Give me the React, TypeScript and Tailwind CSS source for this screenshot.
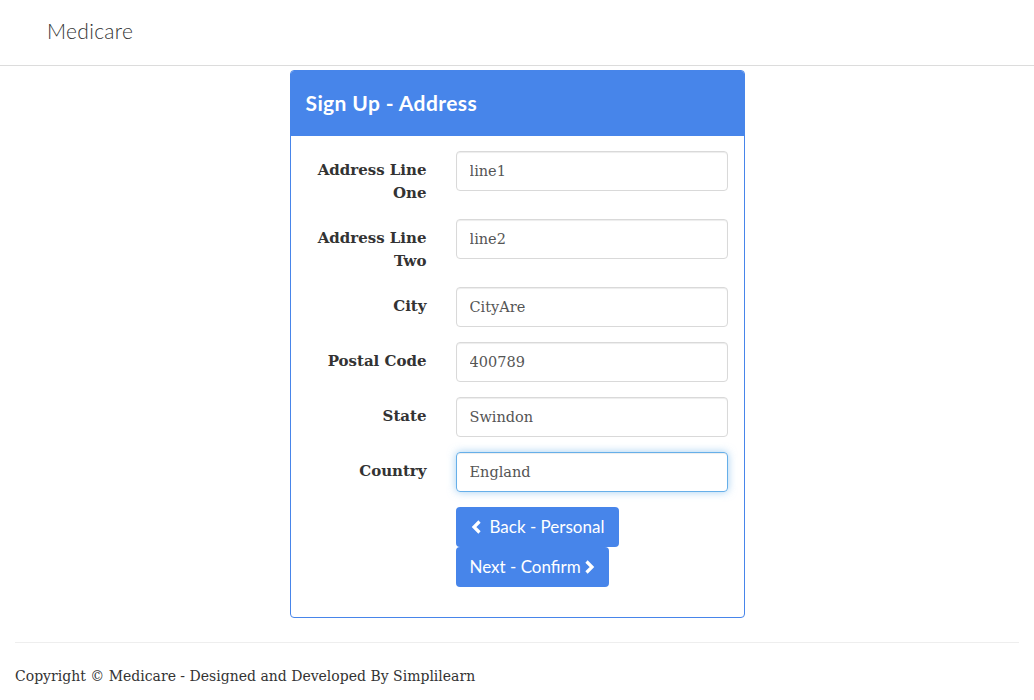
import React from "react";

const serif = "font-['DejaVu_Serif','Georgia',serif]";

function Chevron({ dir }: { dir: "left" | "right" }) {
  return (
    <svg width="11" height="14" viewBox="0 0 11 14" className="inline-block">
      {dir === "left" ? (
        <path d="M8.5 1.5 L3 7 L8.5 12.5" fill="none" stroke="white" strokeWidth="3.2" strokeLinejoin="miter" />
      ) : (
        <path d="M2.5 1.5 L8 7 L2.5 12.5" fill="none" stroke="white" strokeWidth="3.2" strokeLinejoin="miter" />
      )}
    </svg>
  );
}

const fields = [
  { label: "Address Line One", value: "line1", twoLine: true },
  { label: "Address Line Two", value: "line2", twoLine: true },
  { label: "City", value: "CityAre" },
  { label: "Postal Code", value: "400789" },
  { label: "State", value: "Swindon" },
  { label: "Country", value: "England", focus: true },
];

export default function App() {
  return (
    <div className="min-h-screen bg-white text-[#333]">
      <nav className="h-[66px] border-b border-[#dcdcdc] flex items-center pl-[47px] pb-[4px]">
        <span className="font-['Lato',sans-serif] font-light text-[21px] text-[#333] tracking-[0.3px]">Medicare</span>
      </nav>

      <div className="flex justify-center pt-[4px]">
        <div className="w-[455px] border border-[#4785ea] rounded-[4px] overflow-hidden">
          <div className="bg-[#4785ea] h-[65px] flex items-center px-[15px] pb-[2px]">
            <h1 className="font-['Lato',sans-serif] font-bold text-[21px] tracking-[0.4px] text-white">Sign Up - Address</h1>
          </div>
          <div className="px-[15px] pt-[15px] pb-[30px]">
            {fields.map((f) => (
              <div key={f.label} className="flex mb-[15px]">
                <label
                  className={`${serif} w-[121px] text-right font-bold text-[15px] leading-[23px] pt-[8px] text-[#333] ${
                    f.twoLine ? "h-[53px]" : ""
                  }`}
                >
                  {f.label}
                </label>
                <input
                  defaultValue={f.value}
                  className={`${serif} ml-[29px] w-[272px] h-[40px] rounded-[4px] border px-[13px] text-[14.5px] text-[#555] outline-none ${
                    f.focus
                      ? "border-[#66afe9] shadow-[inset_0_1px_1px_rgba(0,0,0,0.075),0_0_8px_rgba(102,175,233,0.6)]"
                      : "border-[#d9d9d9] shadow-[inset_0_1px_1px_rgba(0,0,0,0.075)]"
                  }`}
                />
              </div>
            ))}
            <div className="ml-[150px] flex flex-col items-start">
              <button className="font-['Lato',sans-serif] bg-[#4785ea] text-white text-[17px] h-[40px] px-[15px] rounded-[4px] flex items-center gap-[8px]">
                <Chevron dir="left" />
                Back - Personal
              </button>
              <button className="font-['Lato',sans-serif] bg-[#4785ea] text-white text-[17px] h-[40px] px-[14px] rounded-[4px] flex items-center gap-[3px]">
                Next - Confirm
                <Chevron dir="right" />
              </button>
            </div>
          </div>
        </div>
      </div>

      <footer className="px-[15px] pt-[24px]">
        <hr className="border-t border-[#eee]" />
        <p className={`${serif} text-[14px] text-[#333] pt-[23px]`}>
          Copyright © Medicare - Designed and Developed By Simplilearn
        </p>
      </footer>
    </div>
  );
}
